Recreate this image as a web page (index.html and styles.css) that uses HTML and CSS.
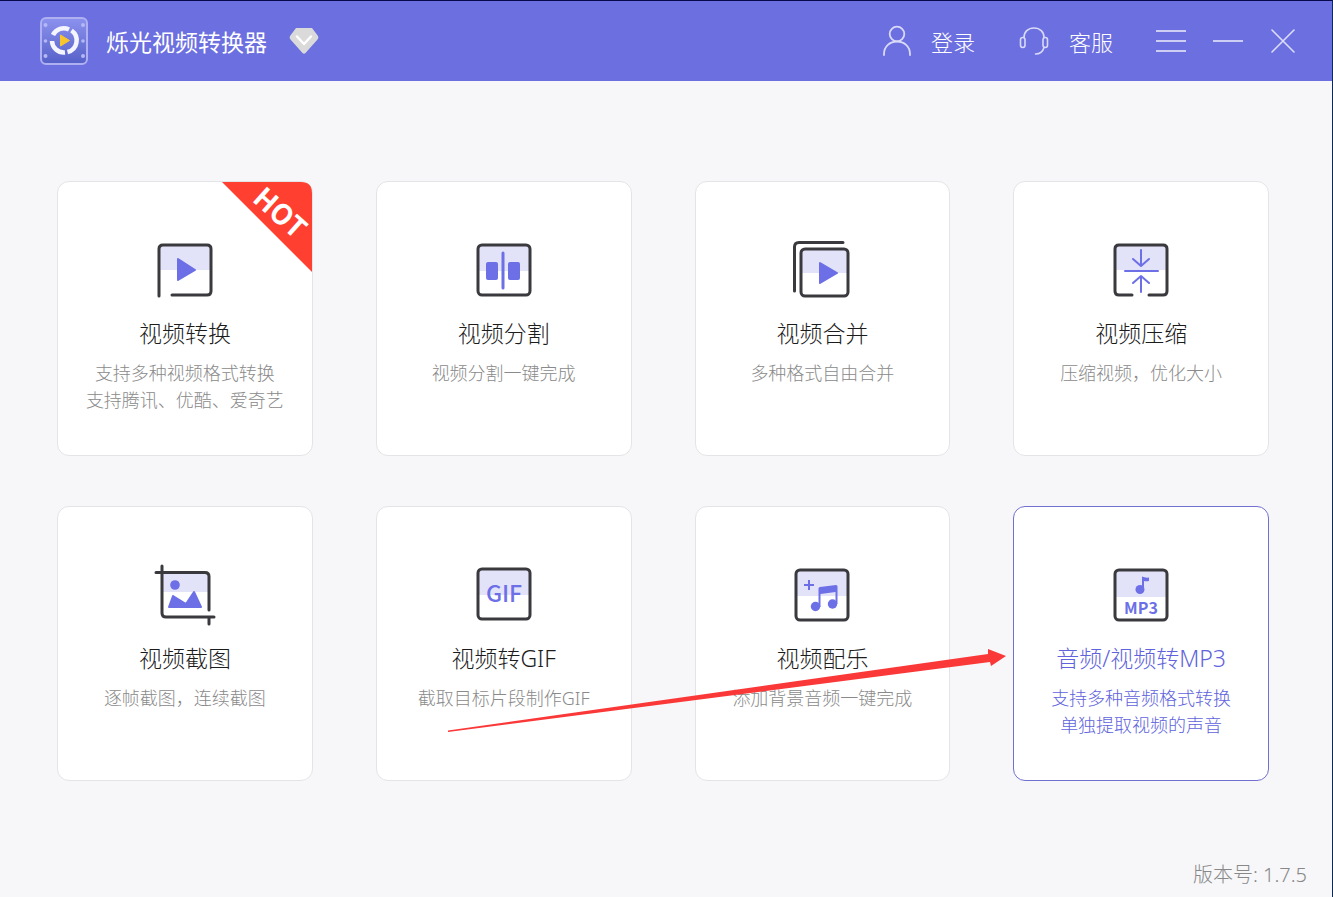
FILE: index.html
```html
<!DOCTYPE html>
<html lang="zh-CN">
<head>
    <meta charset="UTF-8">
    <title>烁光视频转换器</title>
    <link rel="stylesheet" href="styles.css">
</head>
<body>
    <header class="topbar">
        <svg class="logo" width="48" height="48" viewBox="0 0 48 48" fill="none">
            <defs>
                <linearGradient id="logoBg" x1="0" y1="0" x2="0" y2="1">
                    <stop offset="0" stop-color="#8c92ee"/>
                    <stop offset="1" stop-color="#5560c8"/>
                </linearGradient>
            </defs>
            <rect x="1" y="1" width="46" height="46" rx="5" fill="url(#logoBg)" stroke="#aeb0f2" stroke-width="2"/>
            <g fill="#b4b8f4">
                <circle cx="5.500" cy="8" r="2"/><circle cx="5.500" cy="24" r="1.800"/><circle cx="5.500" cy="39" r="2"/>
                <circle cx="43" cy="8" r="2"/><circle cx="43" cy="24" r="1.800"/><circle cx="43" cy="39" r="2"/>
            </g>
            <g stroke="#f4f5ff" stroke-width="4.500">
                <path d="M13 18A12 12 0 0 1 29 12.500"/>
                <path d="M31.500 13.500A12 12 0 0 1 27.500 35"/>
                <path d="M25 35.500A12 12 0 0 1 12 24"/>
            </g>
            <path d="M20.500 18L29.500 23.500L20.500 29Z" fill="#f8c52c" stroke="#f8c52c" stroke-width="1" stroke-linejoin="round"/>
        </svg>
        <h1>烁光视频转换器</h1>
        <a class="vip" href="#" aria-label="VIP">
            <svg width="30" height="28" viewBox="0 0 30 28">
                <path d="M7 1H23L29 9Q30 11 28.500 12.500L16.500 26Q15 27.500 13.500 26L1.500 12.500Q0 11 1 9Z" fill="#dadada"/>
                <path d="M8 9.500L15 17L22 9.500" fill="none" stroke="#fff" stroke-width="2.500" stroke-linecap="round" stroke-linejoin="round"/>
            </svg>
        </a>
        <nav class="actions">
            <a href="#">
                <svg width="28" height="32" viewBox="0 0 28 32" fill="none" stroke="#d9daf8" stroke-width="1.800" stroke-linecap="round">
                    <circle cx="14" cy="9" r="7.300"/>
                    <path d="M1 30V29C1 21.500 7 16.500 14 16.500S27 21.500 27 29V30"/>
                </svg>
                登录
            </a>
            <a href="#">
                <svg width="30" height="32" viewBox="0 0 30 32" fill="none" stroke="#d9daf8" stroke-width="1.600" stroke-linecap="round">
                    <path d="M5 12.500C5 7 9 3 15 3S25 7 25 12.500"/>
                    <rect x="1.500" y="12.500" width="4.500" height="10" rx="2.200"/>
                    <rect x="24" y="12.500" width="4.500" height="10" rx="2.200"/>
                    <path d="M25 22.500C24 26 21 29 16.500 29"/>
                </svg>
                客服
            </a>
        </nav>
        <div class="window-buttons">
            <button type="button" aria-label="菜单">
                <svg width="30" height="24" viewBox="0 0 30 24" stroke="#eeeefb" stroke-width="1.500"><path d="M0 2H30M0 12H30M0 22H30"/></svg>
            </button>
            <button type="button" aria-label="最小化">
                <svg width="30" height="24" viewBox="0 0 30 24" stroke="#eeeefb" stroke-width="1.500"><path d="M0 12H30"/></svg>
            </button>
            <button type="button" aria-label="关闭">
                <svg width="26" height="24" viewBox="0 0 26 24" stroke="#dddef9" stroke-width="1.600" stroke-linecap="round"><path d="M2 1L24 23M24 1L2 23"/></svg>
            </button>
        </div>
    </header>

    <main>
        <div class="cards">
            <a class="card" href="#">
                <svg class="ribbon" width="90" height="90" viewBox="0 0 90 90">
                    <path d="M0 0H79Q90 0 90 11V90Z" fill="#ff3f30"/>
                    <text class="hot" x="0" y="10" transform="translate(58 31) rotate(42)">HOT</text>
                </svg>
                <svg class="icon" viewBox="0 0 64 64">
                    <path class="tint" d="M6 7H58V32H6Z"/>
                    <path class="line" d="M6 58V11Q6 7 10 7H54Q58 7 58 11V53Q58 57 54 57H19"/>
                    <path class="solid" d="M25 21L42 32L25 42Z"/>
                </svg>
                <h2>视频转换</h2>
                <p>支持多种视频格式转换<br>支持腾讯、优酷、爱奇艺</p>
            </a>
            <a class="card" href="#">
                <svg class="icon" viewBox="0 0 64 64">
                    <path class="tint" d="M6 7H58V33H6Z"/>
                    <rect class="line" x="6" y="7" width="52" height="50" rx="4"/>
                    <rect class="solid" x="15" y="25" width="10" height="16" rx="1"/>
                    <rect class="solid" x="37" y="25" width="10" height="16" rx="1"/>
                    <path class="mark" d="M31 15V50"/>
                </svg>
                <h2>视频分割</h2>
                <p>视频分割一键完成</p>
            </a>
            <a class="card" href="#">
                <svg class="icon" viewBox="0 0 64 64">
                    <path class="tint" d="M11 11H58V35H11Z"/>
                    <path class="line" d="M4.500 53V9Q4.500 4.500 9 4.500H53"/>
                    <rect class="line" x="11" y="11" width="47" height="47" rx="4"/>
                    <path class="solid" d="M30 25L47 35L30 45Z"/>
                </svg>
                <h2>视频合并</h2>
                <p>多种格式自由合并</p>
            </a>
            <a class="card" href="#">
                <svg class="icon" viewBox="0 0 64 64">
                    <path class="tint" d="M6 7H58V32H6Z"/>
                    <path class="line" d="M23 57H10Q6 57 6 53V11Q6 7 10 7H54Q58 7 58 11V53Q58 57 54 57H40"/>
                    <path class="mark thin" d="M16 33H49M32 12V27M24 21L32 28L40 21M32 54V39M24 45L32 38L40 45"/>
                </svg>
                <h2>视频压缩</h2>
                <p>压缩视频，优化大小</p>
            </a>
            <a class="card" href="#">
                <svg class="icon" viewBox="0 0 64 64">
                    <path class="tint" d="M9 10H56V29H9Z"/>
                    <path class="line" d="M9 3V50Q9 54 13 54H61M3 9.500H52Q56 9.500 56 13.500V47M56 54V61"/>
                    <circle class="fill" cx="22" cy="22" r="4.800"/>
                    <path class="solid" d="M16 44L20 33L33 41L41 29L48 44Z"/>
                </svg>
                <h2>视频截图</h2>
                <p>逐帧截图，连续截图</p>
            </a>
            <a class="card" href="#">
                <svg class="icon" viewBox="0 0 64 64">
                    <path class="tint" d="M6 6H58V32H6Z"/>
                    <rect class="line" x="6" y="6" width="52" height="50" rx="4"/>
                    <text class="gif" x="32" y="39">GIF</text>
                </svg>
                <h2>视频转GIF</h2>
                <p>截取目标片段制作GIF</p>
            </a>
            <a class="card" href="#">
                <svg class="icon" viewBox="0 0 64 64">
                    <path class="tint" d="M6 7H58V33H6Z"/>
                    <rect class="line" x="6" y="7" width="52" height="50" rx="4"/>
                    <path class="thin" d="M14 22H24M19 17V27"/>
                    <path class="fill" d="M28.500 25.500Q28.500 24 30 24L46 22Q47.500 22 47.500 23.500V41H45.500V29L30.500 31V44H28.500Z"/>
                    <circle class="fill" cx="25.500" cy="43.500" r="4.700"/>
                    <circle class="fill" cx="42.500" cy="41" r="4.700"/>
                </svg>
                <h2>视频配乐</h2>
                <p>添加背景音频一键完成</p>
            </a>
            <a class="card active" href="#">
                <svg class="icon" viewBox="0 0 64 64">
                    <path class="tint" d="M6 7H58V34H6Z"/>
                    <rect class="line" x="6" y="7" width="52" height="50" rx="4"/>
                    <circle class="fill" cx="31" cy="26.500" r="4.500"/>
                    <path class="fill" d="M33 26.500V13.500Q36 15 40 14.500V18Q37 18.500 35 18V26.500Z"/>
                    <text class="mp3" x="32" y="51">MP3</text>
                </svg>
                <h2>音频/视频转MP3</h2>
                <p>支持多种音频格式转换<br>单独提取视频的声音</p>
            </a>
        </div>
        <svg class="pointer" width="560" height="84" viewBox="0 0 560 84">
            <path d="M1 81.500L541 5L541 0L559 7L544 17L543 13L1 83Z" fill="#fb3838"/>
        </svg>
    </main>

    <footer>版本号: 1.7.5</footer>
</body>
</html>
```
FILE: styles.css
```css
* {
    box-sizing: border-box;
}

body {
    margin: 0;
    min-height: 100vh;
    display: flex;
    flex-direction: column;
    font-family: "Noto Sans", "Noto Sans CJK SC", sans-serif;
    font-weight: 300;
    background-color: #f7f7f9;
    border-top: 1px solid #08084c;
    border-right: 1px solid #0b2a55;
}

a {
    color: inherit;
    text-decoration: none;
}

svg {
    display: block;
    flex-shrink: 0;
}

/* top bar */
.topbar {
    display: flex;
    align-items: center;
    height: 80px;
    padding: 0 36px 0 40px;
    background-color: #6c6fdf;
    color: #fff;
}

.topbar h1 {
    margin: 0 22px 0 18px;
    font-size: 23px;
    font-weight: 400;
}

.actions {
    display: flex;
    gap: 44px;
    margin-left: auto;
    font-size: 22px;
    font-weight: 300;
}

.actions a {
    display: flex;
    align-items: center;
    gap: 20px;
}

.window-buttons {
    display: flex;
    gap: 27px;
    margin-left: 43px;
}

.window-buttons button {
    padding: 0;
    border: 0;
    background: none;
    cursor: pointer;
}

/* cards */
main {
    position: relative;
    padding: 100px 63px 0 57px;
}

.cards {
    display: grid;
    grid-template-columns: repeat(4, 1fr);
    gap: 50px 63px;
}

.card {
    position: relative;
    display: flex;
    flex-direction: column;
    align-items: center;
    min-height: 275px;
    padding-top: 56px;
    text-align: center;
    background-color: #fff;
    border: 1px solid #e4e4e8;
    border-radius: 12px;
}

.card h2 {
    margin: 15px 0 11px;
    font-size: 23px;
    font-weight: 300;
    line-height: 32px;
    color: #1c1c1c;
}

.card p {
    margin: 0;
    font-size: 18px;
    line-height: 27px;
    color: #8a8a8a;
    white-space: nowrap;
}

.card.active {
    border-color: #7270d0;
}

.card.active h2,
.card.active p {
    color: #6063dc;
}

.ribbon {
    position: absolute;
    top: 0;
    right: 0;
    overflow: visible;
}

.hot {
    font-family: "Noto Sans CJK SC", sans-serif;
    font-size: 28px;
    font-weight: 700;
    text-anchor: middle;
    fill: #fff;
}

/* card icons */
.icon {
    width: 64px;
    height: 64px;
}

.tint {
    fill: #e2e2f8;
}

.line {
    fill: none;
    stroke: #3a3a3e;
    stroke-width: 3;
    stroke-linecap: round;
}

.mark {
    fill: none;
    stroke: #6c6fe6;
    stroke-width: 3;
    stroke-linecap: round;
    stroke-linejoin: round;
}

.thin {
    stroke: #6c6fe6;
    stroke-width: 2;
}

.fill {
    fill: #6c6fe6;
}

.solid {
    fill: #6c6fe6;
    stroke: #6c6fe6;
    stroke-width: 2;
    stroke-linejoin: round;
}

.gif,
.mp3 {
    font-family: "Noto Sans CJK SC", sans-serif;
    font-weight: 700;
    text-anchor: middle;
    fill: #6c6fe6;
}

.gif {
    font-size: 23px;
    font-weight: 500;
}

.mp3 {
    font-size: 16px;
}

/* red arrow over the cards */
.pointer {
    position: absolute;
    top: 568px;
    left: 447px;
    pointer-events: none;
}

footer {
    margin-top: auto;
    padding: 0 25px 8px;
    font-size: 20px;
    line-height: 28px;
    text-align: right;
    color: #888;
}
```
